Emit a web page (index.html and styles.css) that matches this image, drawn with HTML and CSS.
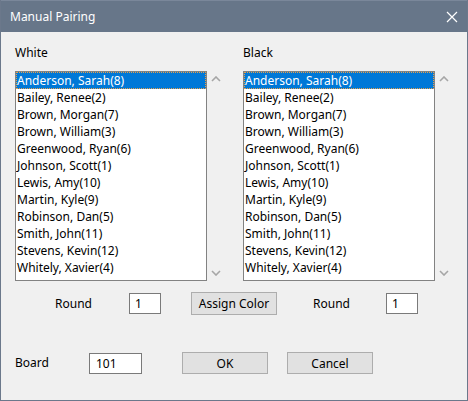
FILE: index.html
```html
<!DOCTYPE html>
<html>
<head>
<meta charset="utf-8">
<link rel="stylesheet" href="styles.css">
</head>
<body>
<div class="window">
  <div class="titlebar">
    <span class="title">Manual Pairing</span>
    <svg class="close" width="12" height="12" viewBox="0 0 12 12"><path d="M1 1 L11 11 M11 1 L1 11" stroke="#ffffff" stroke-width="1.2" fill="none"/></svg>
  </div>
  <div class="content">
    <div class="lists">
      <div class="col">
        <div class="col-label">White</div>
        <div class="listwrap">
          <ul class="listbox">
            <li class="sel">Anderson, Sarah(8)</li>
            <li>Bailey, Renee(2)</li>
            <li>Brown, Morgan(7)</li>
            <li>Brown, William(3)</li>
            <li>Greenwood, Ryan(6)</li>
            <li>Johnson, Scott(1)</li>
            <li>Lewis, Amy(10)</li>
            <li>Martin, Kyle(9)</li>
            <li>Robinson, Dan(5)</li>
            <li>Smith, John(11)</li>
            <li>Stevens, Kevin(12)</li>
            <li>Whitely, Xavier(4)</li>
          </ul>
          <div class="scroll">
            <svg class="chev" width="10" height="6" viewBox="0 0 10 6"><path d="M1 5 L5 1 L9 5" stroke="#a6a6a6" stroke-width="1.6" fill="none"/></svg>
            <svg class="chev" width="10" height="6" viewBox="0 0 10 6"><path d="M1 1 L5 5 L9 1" stroke="#a6a6a6" stroke-width="1.6" fill="none"/></svg>
          </div>
        </div>
      </div>
      <div class="col">
        <div class="col-label">Black</div>
        <div class="listwrap">
          <ul class="listbox">
            <li class="sel">Anderson, Sarah(8)</li>
            <li>Bailey, Renee(2)</li>
            <li>Brown, Morgan(7)</li>
            <li>Brown, William(3)</li>
            <li>Greenwood, Ryan(6)</li>
            <li>Johnson, Scott(1)</li>
            <li>Lewis, Amy(10)</li>
            <li>Martin, Kyle(9)</li>
            <li>Robinson, Dan(5)</li>
            <li>Smith, John(11)</li>
            <li>Stevens, Kevin(12)</li>
            <li>Whitely, Xavier(4)</li>
          </ul>
          <div class="scroll">
            <svg class="chev" width="10" height="6" viewBox="0 0 10 6"><path d="M1 5 L5 1 L9 5" stroke="#a6a6a6" stroke-width="1.6" fill="none"/></svg>
            <svg class="chev" width="10" height="6" viewBox="0 0 10 6"><path d="M1 1 L5 5 L9 1" stroke="#a6a6a6" stroke-width="1.6" fill="none"/></svg>
          </div>
        </div>
      </div>
    </div>
    <div class="row row1">
      <span class="lbl lbl-round1">Round</span>
      <span class="tb tb-round">1</span>
      <span class="btn btn-assign">Assign Color</span>
      <span class="lbl lbl-round2">Round</span>
      <span class="tb tb-round">1</span>
    </div>
    <div class="row row2">
      <span class="lbl lbl-board">Board</span>
      <span class="tb tb-board">101</span>
      <span class="btn btn-ok">OK</span>
      <span class="btn btn-cancel">Cancel</span>
    </div>
  </div>
</div>
</body>
</html>
```
FILE: styles.css
```css
* { box-sizing: border-box; }
html, body { margin: 0; padding: 0; background: #f0f0f0; }
body {
  font-family: "Noto Sans", "Open Sans", sans-serif;
  font-size: 12px;
  color: #000;
}
.window {
  width: 468px;
  height: 401px;
  background: #f0f0f0;
  border-left: 1px solid #6b788b;
  border-right: 1px solid #6b788b;
  border-bottom: 1px solid #6b788b;
}
.titlebar {
  height: 32px;
  background: #677689;
  display: flex;
  align-items: center;
  justify-content: space-between;
  padding-left: 9px;
  padding-right: 9px;
  border-top: 1px solid #7a879a;
}
.title {
  color: #ffffff;
  font-size: 12px;
  line-height: 16px;
}
.close { display: block; }
.content {
  padding-top: 13px;
  padding-left: 14px;
}
.lists {
  display: flex;
  gap: 19px;
}
.col { width: 209px; }
.col-label {
  height: 16px;
  line-height: 16px;
  margin-bottom: 10px;
}
.listwrap {
  display: flex;
  height: 210px;
}
.listbox {
  list-style: none;
  margin: 0;
  padding: 0;
  width: 192px;
  height: 210px;
  border: 1px solid #828282;
  background: #ffffff;
  overflow: hidden;
}
.listbox li {
  height: 17px;
  line-height: 17px;
  padding-left: 1px;
  white-space: nowrap;
}
.listbox li.sel {
  background: #0078d7;
  color: #ffffff;
  outline: 1px dotted #e8a04a;
  outline-offset: -1px;
}
.scroll {
  width: 17px;
  height: 210px;
  display: flex;
  flex-direction: column;
  justify-content: space-between;
  align-items: center;
  padding: 5px 0 5px 1px;
}
.chev { display: block; }
.row {
  display: flex;
  align-items: center;
}
.row1 { margin-top: 11px; height: 23px; }
.row2 { margin-top: 37px; height: 22px; }
.lbl { display: block; line-height: 16px; }
.lbl-round1 { margin-left: 40px; width: 74px; }
.lbl-round2 { margin-left: 36px; width: 73px; }
.lbl-board { width: 74px; }
.tb {
  display: block;
  height: 21px;
  line-height: 19px;
  background: #ffffff;
  border: 1px solid #7a7a7a;
}
.tb-round { width: 32px; padding-left: 5px; }
.tb-board { width: 53px; padding-left: 6px; }
.btn {
  display: flex;
  align-items: center;
  justify-content: center;
  width: 86px;
  background: #e1e1e1;
  border: 1px solid #adadad;
}
.btn-assign { margin-left: 30px; height: 23px; }
.btn-ok { margin-left: 40px; height: 22px; }
.btn-cancel { margin-left: 19px; height: 22px; }
```
